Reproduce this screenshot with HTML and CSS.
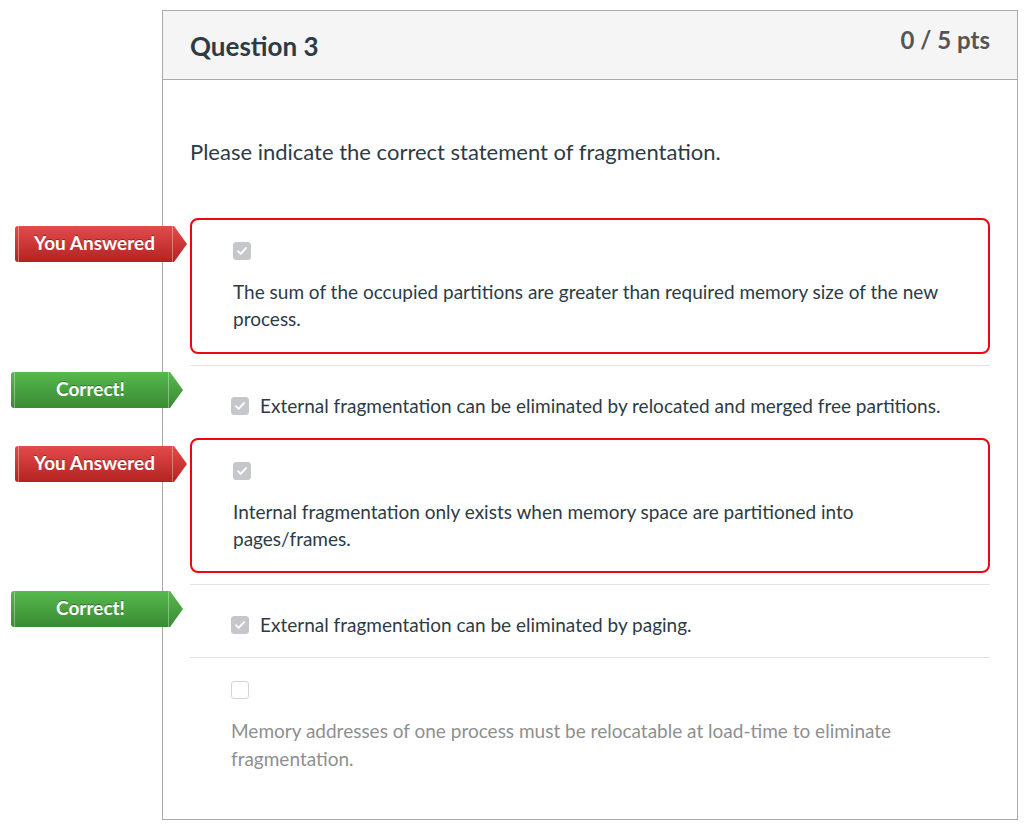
FILE: index.html
```html
<!DOCTYPE html>
<html lang="en">
<head>
    <meta charset="UTF-8">
    <title>Question 3</title>
    <link rel="stylesheet" href="styles.css">
</head>
<body>

    <div class="question">
        <div class="header">
            <h2>Question 3</h2>
            <span class="pts">0 / 5 pts</span>
        </div>

        <div class="content">
            <p class="text">Please indicate the correct statement of fragmentation.</p>

            <div class="answers">
                <div class="answer selected">
                    <span class="badge wrong">You Answered</span>
                    <span class="box checked"><svg viewBox="0 0 18 18"><path d="M4.5 9.2l3 3 6-6.4" /></svg></span>
                    <div class="label">The sum of the occupied partitions are greater than required memory size of the new process.</div>
                </div>

                <div class="answer inline">
                    <span class="badge right">Correct!</span>
                    <span class="box checked"><svg viewBox="0 0 18 18"><path d="M4.5 9.2l3 3 6-6.4" /></svg></span>
                    <div class="label">External fragmentation can be eliminated by relocated and merged free partitions.</div>
                </div>

                <div class="answer selected second">
                    <span class="badge wrong">You Answered</span>
                    <span class="box checked"><svg viewBox="0 0 18 18"><path d="M4.5 9.2l3 3 6-6.4" /></svg></span>
                    <div class="label">Internal fragmentation only exists when memory space are partitioned into pages/frames.</div>
                </div>

                <div class="answer inline">
                    <span class="badge right">Correct!</span>
                    <span class="box checked"><svg viewBox="0 0 18 18"><path d="M4.5 9.2l3 3 6-6.4" /></svg></span>
                    <div class="label">External fragmentation can be eliminated by paging.</div>
                </div>

                <div class="answer muted">
                    <span class="box"></span>
                    <div class="label">Memory addresses of one process must be relocatable at load-time to eliminate fragmentation.</div>
                </div>
            </div>
        </div>
    </div>

</body>
</html>
```

FILE: styles.css
```css
body {
    margin: 0;
    font-family: Lato, "Liberation Sans", sans-serif;
    color: #2d3b45;
    background: #fff;
}
.question {
    margin: 10px 0 0 162px;
    width: 856px;
    box-sizing: border-box;
    border: 1px solid #aaa;
}
.header {
    display: flex;
    justify-content: space-between;
    align-items: flex-start;
    height: 68px;
    padding: 0 27px;
    background: #f5f5f5;
    border-bottom: 1px solid #aaa;
}
.header h2 {
    margin: 20px 0 0;
    font-size: 26px;
    line-height: 1.2;
    font-weight: bold;
}
.pts {
    margin-top: 15px;
    font-size: 24px;
    line-height: 1.2;
    font-weight: bold;
    color: #555;
}
.content {
    padding: 0 27px 27px 27px;
}
.text {
    margin: 57px 0 51px;
    font-size: 22px;
    line-height: 30px;
}
.answer {
    position: relative;
    padding: 26px 41px 19px;
    border-top: 1px solid #e3e3e3;
    font-size: 19px;
    line-height: 27px;
}
.answer.inline {
    display: flex;
    align-items: center;
    gap: 11px;
}
.answer.selected {
    border: 2px solid #ee0612;
    border-radius: 8px;
    padding: 22px 40px 20px 41px;
    margin-bottom: 11px;
}
.answer.selected.second {
    padding-bottom: 19px;
}
.answer.muted {
    padding-top: 23px;
    color: #8f8f8f;
}
.muted .label {
    line-height: 28px;
}
.box {
    display: block;
    width: 18px;
    height: 18px;
    box-sizing: border-box;
    border-radius: 3px;
    border: 1px solid #d5d5d8;
    background: #fff;
    flex: none;
}
.box.checked {
    background: #c6c7cb;
    border-color: #c6c7cb;
}
.box svg {
    display: block;
    width: 16px;
    height: 16px;
}
.box svg path {
    fill: none;
    stroke: #fff;
    stroke-width: 2.2;
    stroke-linecap: round;
    stroke-linejoin: round;
}
.selected .box,
.muted .box {
    margin-bottom: 18px;
}
.badge {
    position: absolute;
    top: 6px;
    left: -177px;
    width: 172px;
    height: 36px;
    box-sizing: border-box;
    padding-right: 13px;
    border-radius: 3px 0 0 3px;
    clip-path: polygon(0 0, calc(100% - 13px) 0, 100% 50%, calc(100% - 13px) 100%, 0 100%);
    color: #fff;
    font-size: 19px;
    font-weight: bold;
    line-height: 34px;
    text-align: center;
    text-shadow: 0 -1px 0 rgba(0, 0, 0, 0.35);
}
.badge::before {
    content: "";
    position: absolute;
    top: 0;
    bottom: 0;
    left: 3px;
    right: 14px;
    border-left: 1px solid rgba(255, 255, 255, 0.35);
    border-right: 1px solid rgba(255, 255, 255, 0.35);
}
.badge.wrong {
    background: linear-gradient(#e44b4b, #b32222);
}
.badge.right {
    left: -179px;
    background: linear-gradient(#56b94d, #3a8a33);
}
```
